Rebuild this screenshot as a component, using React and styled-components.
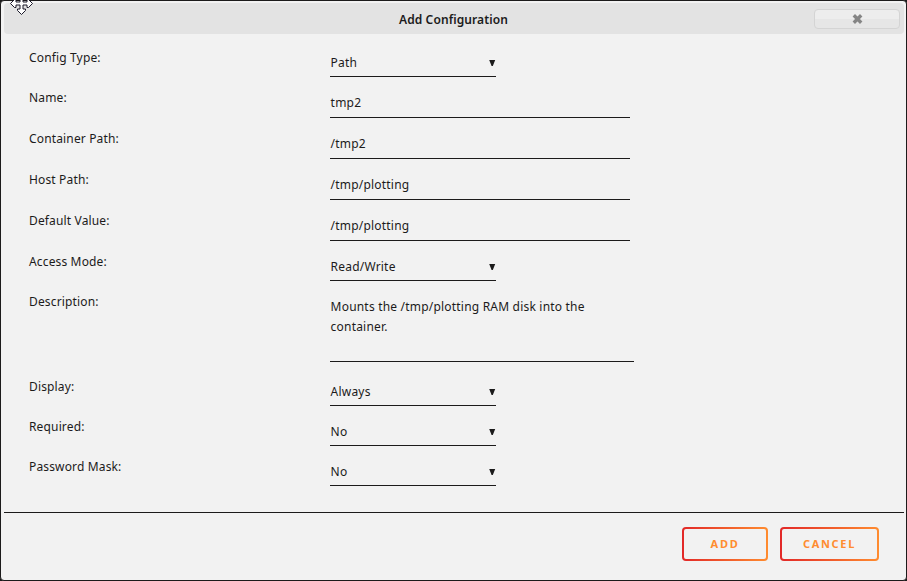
import React from "react";
import styled, { createGlobalStyle } from "styled-components";

const GlobalStyle = createGlobalStyle`
  * { box-sizing: border-box; }
  body { margin: 0; background: #1c1b1b; overflow: hidden; }
`;

const Dialog = styled.div`
  position: relative;
  width: 907px;
  height: 581px;
  padding: 2px 2px 0 3px;
  border: 1px solid #1c1b1b;
  border-radius: 4px;
  background: #f2f2f2;
  color: #1c1b1b;
  font: 12px/20px "Noto Sans", sans-serif;
  letter-spacing: 0.2px;
`;

const TitleBar = styled.header`
  display: grid;
  grid-template-columns: 1fr auto 1fr;
  align-items: center;
  height: 31px;
  padding-right: 4px;
  border-radius: 4px;
  background: #e3e3e3;
`;

const Title = styled.h1`
  grid-column: 2;
  margin: 3px 0 0 3px;
  font-size: 12px;
  line-height: 20px;
  font-weight: 600;
  letter-spacing: 0.1px;
`;

const CloseButton = styled.button`
  display: flex;
  align-items: center;
  justify-content: center;
  justify-self: end;
  width: 86px;
  height: 20px;
  margin-top: 1px;
  padding: 0 0 0 1px;
  border: 1px solid #d4d4d4;
  border-radius: 4px;
  background: linear-gradient(#ededed 50%, #e6e6e6 50%);
`;

const MoveCursor = styled.svg`
  position: absolute;
  left: 8px;
  top: -10px;
`;

const Form = styled.div`
  padding: 6px 0 0 25px;
`;

const Row = styled.div`
  display: grid;
  grid-template-columns: 301px 1fr;
  height: ${(p) => p.$height}px;
`;

const Label = styled.label`
  padding-top: 8px;
  letter-spacing: 0.15px;
`;

const Field = styled.div`
  display: flex;
  justify-content: space-between;
  width: ${(p) => p.$width}px;
  height: ${(p) => p.$height}px;
  padding: 13px 0 0 0.6px;
  border-bottom: 1px solid #1c1b1b;
`;

const Arrow = styled.svg`
  margin-top: 6px;
`;

const AreaText = styled.span`
  width: 275px;
`;

const Footer = styled.footer`
  display: flex;
  justify-content: flex-end;
  gap: 12px;
  margin-top: 23px;
  padding: 14px 25px 0 0;
  border-top: 1px solid #1c1b1b;
`;

const ActionButton = styled.button`
  width: ${(p) => p.$width}px;
  height: 34px;
  padding: 0 0 1px;
  border: 2px solid transparent;
  border-radius: 4px;
  background:
    linear-gradient(#f2f2f2, #f2f2f2) padding-box,
    linear-gradient(90deg, #e22828, #ff8c2f) border-box;
  color: #ff8c2f;
  font: 700 11px/20px "Noto Sans", sans-serif;
  letter-spacing: 1.7px;
`;

const fields = [
  { label: "Config Type:", value: "Path", kind: "select", row: 40 },
  { label: "Name:", value: "tmp2", row: 41 },
  { label: "Container Path:", value: "/tmp2", row: 41 },
  { label: "Host Path:", value: "/tmp/plotting", row: 41 },
  { label: "Default Value:", value: "/tmp/plotting", row: 41 },
  { label: "Access Mode:", value: "Read/Write", kind: "select", row: 40 },
  {
    label: "Description:",
    value: "Mounts the /tmp/plotting RAM disk into the container.",
    kind: "area",
    row: 85,
  },
  { label: "Display:", value: "Always", kind: "select", row: 40 },
  { label: "Required:", value: "No", kind: "select", row: 40 },
  { label: "Password Mask:", value: "No", kind: "select", row: 40 },
];

const sizes = {
  select: { $width: 166, $height: 37 },
  text: { $width: 300, $height: 38 },
  area: { $width: 304, $height: 78 },
};

export default function App() {
  return (
    <>
      <GlobalStyle />
      <Dialog role="dialog">
        <TitleBar>
          <Title>Add Configuration</Title>
          <CloseButton aria-label="Close">
            <svg width="11" height="10" viewBox="0 0 11 10">
              <path d="M1.8 1.300 9.200 8.700M9.200 1.300 1.800 8.700" stroke="#858585" strokeWidth="3.4" />
            </svg>
          </CloseButton>
        </TitleBar>
        <MoveCursor width="25" height="25" viewBox="0 0 25 25">
          <path
            d="M12.5 1.5 8.5 5.5V7H11V11H7V8.5H5.500L1.500 12.500 5.500 16.500H7V14H11V18H8.500V19.500L12.500 23.500 16.500 19.500V18H14V14H18V16.500H19.500L23.500 12.500 19.500 8.500H18V11H14V7H16.500V5.500Z"
            fill="#fff"
            stroke="#1c1b2b"
          />
        </MoveCursor>
        <Form>
          {fields.map(({ label, value, kind = "text", row }) => (
            <Row key={label} $height={row}>
              <Label>{label}</Label>
              <Field {...sizes[kind]}>
                {kind === "area" ? <AreaText>{value}</AreaText> : <span>{value}</span>}
                {kind === "select" && (
                  <Arrow width="8" height="7" viewBox="0 0 8 7">
                    <path d="M1.200 1H7.200L4.800 7H3.600Z" fill="#1c1b1b" />
                  </Arrow>
                )}
              </Field>
            </Row>
          ))}
        </Form>
        <Footer>
          <ActionButton $width={86}>ADD</ActionButton>
          <ActionButton $width={99}>CANCEL</ActionButton>
        </Footer>
      </Dialog>
    </>
  );
}
